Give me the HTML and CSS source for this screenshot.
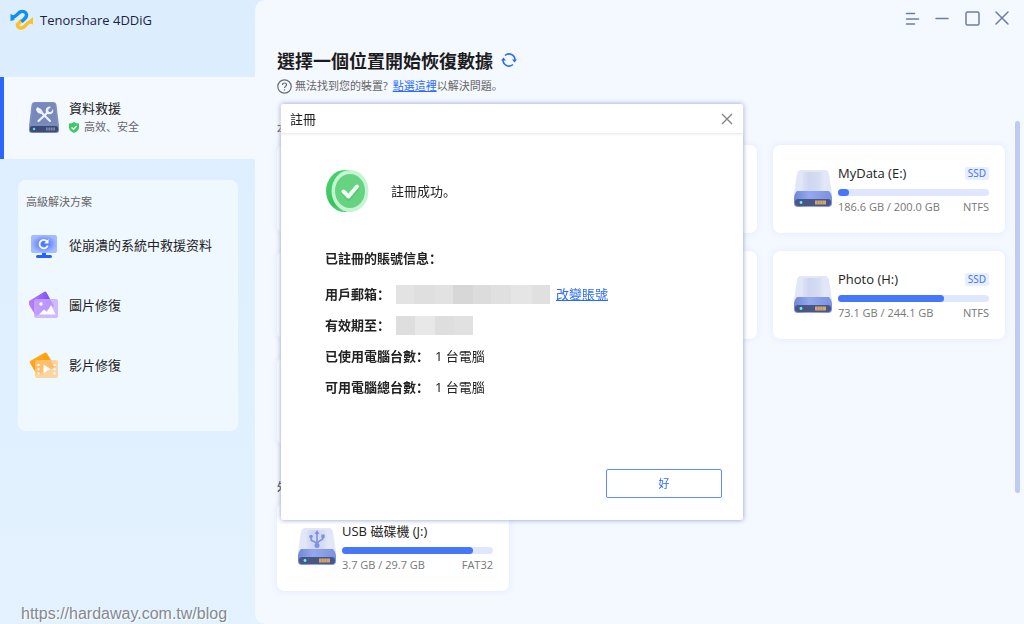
FILE: index.html
```html
<!DOCTYPE html>
<html lang="zh-Hant">
<head>
<meta charset="utf-8">
<meta name="viewport" content="width=device-width, initial-scale=1">
<title>Tenorshare 4DDiG</title>
<link rel="stylesheet" href="styles.css">
</head>
<body>
<svg class="defs" aria-hidden="true">
  <defs>
    <linearGradient id="top" x1="0" x2="1"><stop offset="0" stop-color="#dde3f5"/><stop offset=".3" stop-color="#ced7ef"/><stop offset=".75" stop-color="#d6ddf2"/><stop offset="1" stop-color="#e6eaf8"/></linearGradient>
    <linearGradient id="band" x1="0" x2="1"><stop offset="0" stop-color="#6f87d6"/><stop offset=".4" stop-color="#94a8ee"/><stop offset="1" stop-color="#7b92e0"/></linearGradient>
    <symbol id="drive" viewBox="0 0 38 38">
      <path d="M7 0h24q3 0 4 4l3 20v3H0v-3L3 4q1-4 4-4z" fill="#e2e7f7"/>
      <path d="M10 2h18q2 0 2 3l1 17H8L9 5q0-3 1-3z" fill="url(#top)"/>
      <path d="M3 21h32q3 3 3 8v4q0 4-4 4H4q-4 0-4-4v-4q0-5 3-8z" fill="url(#band)"/>
      <rect x="1" y="29" width="36" height="7" rx="3" fill="#4a5784"/>
      <circle cx="7" cy="32.500" r="1.400" fill="#6ff0f2"/>
      <path d="M21 30.500h11v4H21z" fill="#d0a673"/>
      <path d="M23.500 30.500v4M26 30.500v4M28.500 30.500v4" stroke="#9f835f" stroke-width=".5"/>
    </symbol>
  </defs>
</svg>
<div class="app">
  <aside class="sidebar">
    <div class="brand">
      <svg width="24" height="22" viewBox="0 0 24 22" fill="none" stroke-width="3.400" aria-hidden="true">
        <path d="M7.500 14.500C7 18 10 20 13 18.500c3-1.500 4-5.500 8-6" stroke="#ffc021"/>
        <path d="M19.500 11L23 8v7.500l-2.500-1z" fill="#ffc021"/>
        <path d="M7.500 15.500L12 11" stroke="#ffc021"/>
        <path d="M3 8.200C6.500 7.500 7.500 4.500 10 3c3-1.500 6 0 6.500 2.500S15.500 9 11.500 12.800" stroke="#0f8ff0"/>
        <path d="M.500 5l3.500 1.500.500 4.500L.500 12z" fill="#0f8ff0"/>
      </svg>
      <span>Tenorshare 4DDiG</span>
    </div>
    <a class="nav-active" href="#recovery">
      <svg width="30" height="32" viewBox="0 0 30 32" aria-hidden="true">
        <path d="M6 0h18q3 0 3.500 3L30 24H0L2.500 3Q3 0 6 0z" fill="#7f8fc0"/>
        <path d="M6 1h18q2 0 2 3l2 18H2L4 4q0-3 2-3z" fill="#7788bb"/>
        <rect y="23" width="30" height="8" rx="3" fill="#7787b9"/>
        <rect x="1" y="24" width="28" height="6" rx="2" fill="#3d4c76"/>
        <circle cx="5" cy="27" r="1.200" fill="#5de0df"/>
        <path d="M17 25.500h9v3h-9z" fill="#7d89a9"/><path d="M19 25v4M21.500 25v4M24 25v4" stroke="#3d4c76" stroke-width=".6"/>
        <path d="M9.500 19l9-8.500M13 11l8 8" stroke="#eef2ff" stroke-width="2.200" stroke-linecap="round"/>
        <path d="M8 5l4 2 2 3-2 2-3-1-2-3z" fill="#eef2ff"/>
        <path d="M22 5l-3 3 1 2 2 0 2-3q1 4-2 5-3 1-5-1-1-4 1-5.500Q20 4 22 5z" fill="#eef2ff"/>
      </svg>
      <span class="nav-text">
        <span>資料救援</span>
        <span class="nav-note">
          <svg width="10" height="11" viewBox="0 0 10 11" aria-hidden="true"><path d="M5 0Q7 1.500 10 1.500V6Q9.500 9 5 11 .500 9 0 6V1.500Q3 1.500 5 0z" fill="#3dc963"/><path d="M2.500 5.500l2 1.800L7.700 4" fill="none" stroke="#fff" stroke-width="1.300"/></svg>
          高效、安全
        </span>
      </span>
    </a>
    <nav class="panel" aria-labelledby="panel-title">
      <h2 id="panel-title" class="panel-title">高級解決方案</h2>
      <a class="tool" href="#crashed">
        <svg width="30" height="28" viewBox="0 0 30 28" aria-hidden="true">
          <defs><radialGradient id="screen"><stop offset="0" stop-color="#3e6dff"/><stop offset=".5" stop-color="#6f91ff"/><stop offset="1" stop-color="#a5bbff"/></radialGradient></defs>
          <path d="M13 21h4v4h-4z" fill="#2463ff"/><rect x="7" y="24" width="16" height="3" rx="1.500" fill="#2463ff"/>
          <rect x="2" y="4" width="26" height="18" rx="2" fill="url(#screen)"/>
          <path d="M18 10.500a4.200 4.200 0 1 0 .7 4" fill="none" stroke="#fff" stroke-width="1.800"/><path d="M19.500 8v4.500H15z" fill="#fff"/>
        </svg>
        從崩潰的系統中救援资料
      </a>
      <a class="tool" href="#photo">
        <svg width="30" height="28" viewBox="0 0 30 28" aria-hidden="true">
          <defs><linearGradient id="violet" x1="0" x2="1"><stop offset="0" stop-color="#c084ff"/><stop offset="1" stop-color="#7143f5"/></linearGradient></defs>
          <path d="M0 10L15 1q1.500-1 2.500.5L25 15 7 25-1 12q-.5-1 1-2z" fill="url(#violet)"/>
          <rect x="5" y="8" width="24" height="19" rx="2" fill="#c7a9ff" fill-opacity=".8"/>
          <circle cx="12" cy="13" r="1.700" fill="#fff"/><path d="M10 23.500l5-5 3 2.500 4-7 4.500 9.500z" fill="#fff"/>
        </svg>
        圖片修復
      </a>
      <a class="tool" href="#video">
        <svg width="30" height="28" viewBox="0 0 30 28" aria-hidden="true">
          <defs><linearGradient id="amber" y2="1"><stop offset="0" stop-color="#ffb21e"/><stop offset="1" stop-color="#ff8a00"/></linearGradient></defs>
          <path d="M2 9.500L15 2q2-1 3 .5L26 16 8 24 1 12q-1-1.500 1-2.500z" fill="url(#amber)"/>
          <rect x="6" y="9" width="23" height="18" rx="2" fill="#ffc989" fill-opacity=".78"/>
          <path d="M9.500 13v11M25.500 13v11" stroke="#fff" stroke-width="2" stroke-dasharray="2 2.300"/><path d="M14.500 13.500l7 4.500-7 4z" fill="#fff"/>
        </svg>
        影片修復
      </a>
    </nav>
    <a class="site" href="https://hardaway.com.tw/blog">https://hardaway.com.tw/blog</a>
  </aside>

  <main class="main">
    <div class="controls">
      <button aria-label="選單"><svg width="16" height="16" viewBox="0 0 16 16"><path d="M2.500 3.500h8M2.500 9h12M2.500 14h8"/></svg></button>
      <button aria-label="最小化"><svg width="16" height="16" viewBox="0 0 16 16"><path d="M2 8.500h12"/></svg></button>
      <button aria-label="最大化"><svg width="16" height="16" viewBox="0 0 16 16"><rect x="2" y="2" width="13" height="13" rx="1.500"/></svg></button>
      <button aria-label="關閉視窗"><svg width="16" height="16" viewBox="0 0 16 16"><path d="M2 2l12 12M14 2L2 14"/></svg></button>
    </div>
    <header class="heading">
      <h1>選擇一個位置開始恢復數據</h1>
      <button class="refresh" aria-label="重新整理"><svg width="16" height="16" viewBox="0 0 16 16" fill="none" stroke="#2b6bff" stroke-width="1.600" aria-hidden="true"><path d="M4 3.500A6 6 0 0 1 14 8M12 12.500A6 6 0 0 1 2 8"/><path d="M11 7.500h5l-2.500 3zM0 8.500h5L2.500 5.500z" fill="#2b6bff" stroke="none"/></svg></button>
    </header>
    <p class="help">
      <svg width="15" height="15" viewBox="0 0 15 15" fill="none" stroke="#666b76" stroke-width="1.200" aria-hidden="true"><circle cx="7.500" cy="7.500" r="6.700"/><path d="M5.500 6q0-2 2-2t2 1.800q0 1-1 1.600t-1 1.600M7.500 10.200v1.300"/></svg>
      <span>無法找到您的裝置? <a href="#help">點選這裡</a>以解決問題。</span>
    </p>
    <div class="scroll">
      <div class="content">
        <h2 class="group">本</h2>
        <div class="grid">
          <div class="card"></div>
          <div class="card"></div>
          <article class="card">
            <svg class="drive" aria-hidden="true"><use href="#drive"/></svg>
            <div class="info">
              <div class="line"><h3>MyData (E:)</h3><span class="tag">SSD</span></div>
              <div class="bar"><div class="fill" style="width:7%"></div></div>
              <div class="line meta"><span>186.6 GB / 200.0 GB</span><span>NTFS</span></div>
            </div>
          </article>
          <div class="card"></div>
          <div class="card"></div>
          <article class="card">
            <svg class="drive" aria-hidden="true"><use href="#drive"/></svg>
            <div class="info">
              <div class="line"><h3>Photo (H:)</h3><span class="tag">SSD</span></div>
              <div class="bar"><div class="fill" style="width:70%"></div></div>
              <div class="line meta"><span>73.1 GB / 244.1 GB</span><span>NTFS</span></div>
            </div>
          </article>
          <div class="card"></div>
        </div>
        <h2 class="group external">外</h2>
        <div class="grid">
          <article class="card">
            <svg class="drive" viewBox="0 0 38 38" aria-hidden="true"><use href="#drive"/><g fill="none" stroke="#7d91e0" stroke-width="1.600"><path d="M19 5v13M13 8v3q0 2 3 2.500l3 2 3-3q3-.5 3-3V8"/></g><g fill="#7d91e0"><path d="M19 2l2.500 4h-5z"/><circle cx="19" cy="17.500" r="2.500"/><circle cx="13" cy="8.500" r="1.800"/><path d="M23.300 6.500h3.400v3.400h-3.400z"/></g></svg>
            <div class="info">
              <div class="line"><h3>USB 磁碟機 (J:)</h3></div>
              <div class="bar"><div class="fill" style="width:87%"></div></div>
              <div class="line meta"><span>3.7 GB / 29.7 GB</span><span>FAT32</span></div>
            </div>
          </article>
        </div>
      </div>
      <div class="thumb"></div>
    </div>
  </main>
</div>

<div class="overlay">
  <section class="dialog" role="dialog" aria-labelledby="dialog-title">
    <header class="dialog-head">
      <h2 id="dialog-title">註冊</h2>
      <button aria-label="關閉"><svg width="12" height="12" viewBox="0 0 12 12" aria-hidden="true"><path d="M1 1l10 10M11 1L1 11" stroke="#858585" stroke-width="1.400"/></svg></button>
    </header>
    <div class="dialog-body">
      <div class="success">
        <svg width="44" height="44" viewBox="0 0 44 44" aria-hidden="true">
          <defs><linearGradient id="coin" y2="1"><stop offset="0" stop-color="#4fd473"/><stop offset=".5" stop-color="#35c45c"/><stop offset="1" stop-color="#86e3a0"/></linearGradient></defs>
          <ellipse cx="19.500" cy="22" rx="18.500" ry="21" fill="url(#coin)"/><path d="M19 1h6v42h-6z" fill="url(#coin)"/>
          <ellipse cx="25" cy="22" rx="18.500" ry="21" fill="#c5f4d2"/>
          <ellipse cx="25" cy="22" rx="15" ry="17" fill="#65d380"/>
          <path d="M18.500 24.500l5 5.500 9-10" fill="none" stroke="#47b965" stroke-width="4" stroke-linecap="round" stroke-linejoin="round" opacity=".4"/>
          <path d="M18.500 22.500l5 5 8.500-10" fill="none" stroke="#f2fff5" stroke-width="4" stroke-linecap="round" stroke-linejoin="round"/>
        </svg>
        <span>註冊成功。</span>
      </div>
      <h3 class="account-title">已註冊的賬號信息：</h3>
      <dl class="account">
        <div><dt>用戶郵箱：</dt><dd><span class="mask email" role="img" aria-label="已隱藏"></span><a href="#account">改變賬號</a></dd></div>
        <div><dt>有效期至：</dt><dd><span class="mask date" role="img" aria-label="已隱藏"></span></dd></div>
        <div><dt>已使用電腦台數：</dt><dd>1 台電腦</dd></div>
        <div><dt>可用電腦總台數：</dt><dd>1 台電腦</dd></div>
      </dl>
      <button class="ok">好</button>
    </div>
  </section>
</div>
</body>
</html>
```

FILE: styles.css
```css
* { box-sizing: border-box; }
body {
  margin: 0;
  font: 13px/20px "Noto Sans", "Noto Sans CJK SC", sans-serif;
  font-feature-settings: "locl" 0;
  color: #222;
  background: #dfeffe;
}
h1, h2, h3, p, dl, dd { margin: 0; font-weight: 400; font-size: 13px; }
button { padding: 0; border: 0; background: none; font: inherit; }
svg { display: block; flex: none; }
a { color: #2b6bff; }
.defs { position: absolute; width: 0; height: 0; }

.app {
  display: flex;
  min-height: 100vh;
  background: linear-gradient(#dcedfe, #e4f2ff);
}

.sidebar { width: 255px; flex: none; display: flex; flex-direction: column; }
.brand {
  display: flex;
  align-items: center;
  gap: 6px;
  height: 77px;
  padding: 0 10px 37px;
  color: #1b1f45;
  font-family: "Open Sans", sans-serif;
}
.nav-active {
  display: flex;
  align-items: center;
  gap: 10px;
  height: 82px;
  padding-left: 25px;
  border-left: 4px solid #2b66ff;
  background: #f4f8ff;
  color: #222;
  text-decoration: none;
}
.nav-text { display: grid; padding-bottom: 2px; }
.nav-note { display: flex; align-items: center; gap: 5px; font-size: 11px; line-height: 18px; color: #666; }
.panel {
  margin: 21px 17px 0 18px;
  padding: 12px 9px 36px 8px;
  border-radius: 8px;
  background: #f0f8ff;
}
.panel-title { margin-bottom: 3px; font-size: 11px; color: #666; }
.tool {
  display: flex;
  align-items: center;
  gap: 10px;
  height: 60px;
  padding-left: 3px;
  color: #222;
  text-decoration: none;
}
.site {
  margin: auto 0 0 21px;
  font: 16px/20px "Liberation Sans", Arial, sans-serif;
  color: #858990;
  text-decoration: none;
  text-shadow: 1px 1px 0 #fff;
}

.main {
  flex: 1;
  min-width: 0;
  display: flex;
  flex-direction: column;
  padding: 0 4px 0 22px;
  border-radius: 10px 0 0 10px;
  background: #f4f8ff;
}
.controls { display: flex; justify-content: flex-end; gap: 14px; padding: 10px 10px 0 0; }
.controls svg { fill: none; stroke: #6d7ba8; stroke-width: 1.5; stroke-linecap: round; }
.heading { display: flex; align-items: center; gap: 8px; margin-top: 21px; }
.heading h1 { font: 700 18px/26px "Noto Sans CJK SC", sans-serif; color: #1c1c1c; }
.help { display: flex; align-items: center; gap: 3px; margin-top: 3px; font-size: 11px; color: #666; }
.help a { margin-left: 2px; }
.scroll { flex: 1; display: flex; align-items: flex-start; gap: 10px; margin-top: 25px; }
.content { flex: 1; min-width: 0; }
.thumb { width: 5px; height: 372px; border-radius: 3px; background: #becbf3; }
.group { font-size: 11px; line-height: 16px; margin-bottom: 8px; }
.external { margin-top: 34px; }
.grid { display: grid; grid-template-columns: repeat(3, 1fr); gap: 18px 16px; }
.card {
  display: flex;
  align-items: flex-start;
  gap: 6px;
  min-height: 88px;
  padding: 17px 16px 14px 21px;
  border-radius: 7px;
  background: #fff;
  box-shadow: 0 0 6px #dfe8ff;
}
.drive { width: 38px; height: 38px; margin-top: 8px; }
.info { flex: 1; min-width: 0; }
.line { display: flex; justify-content: space-between; align-items: center; }
.line h3 { font-family: "Open Sans", "Noto Sans CJK SC", sans-serif; line-height: 22px; }
.tag { padding: 0 3px; border-radius: 2px; background: #e8efff; color: #3f73ff; font-size: 10px; line-height: 13px; }
.bar { height: 7px; margin: 5px 0 2px; border-radius: 4px; background: #dfe7ff; }
.fill { height: 100%; border-radius: 4px; background: #4677fa; }
.meta { font: 11px/18px "Open Sans", sans-serif; color: #777; }

.overlay {
  position: fixed;
  inset: 0;
  display: flex;
  align-items: center;
  justify-content: center;
}
.dialog {
  width: 462px;
  border-radius: 2px;
  background: #fff;
  box-shadow: 0 0 5px #8d9bc9;
}
.dialog-head {
  display: flex;
  align-items: center;
  justify-content: space-between;
  height: 30px;
  padding: 0 10px 0 9px;
  border-bottom: 1px solid #eee;
  box-shadow: 0 1px 2px #f2f2f2;
}
.dialog-body { display: flex; flex-direction: column; padding: 35px 21px 22px 44px; }
.success { display: flex; align-items: center; gap: 22px; }
.account-title { margin-top: 35px; font-weight: 700; }
.account { display: grid; gap: 11px; margin-top: 16px; }
.account > div { display: flex; align-items: center; gap: 6px; }
.account dt { font-weight: 700; }
.account dd { display: flex; align-items: center; gap: 6px; }
.mask { display: block; height: 19px; }
.email { width: 154px; background: linear-gradient(90deg, #e3e3e3 12%, #dfdfdf 12% 25%, #e2e2e2 25% 37%, #d7d7d7 37% 50%, #dcdcdc 50% 62%, #e0e0e0 62% 75%, #e5e5e5 75% 88%, #e0e0e0 88%); }
.date { width: 77px; background: linear-gradient(90deg, #dedede 25%, #e8e8e8 25% 50%, #dedede 50% 75%, #e1e1e1 75%); }
.ok {
  align-self: flex-end;
  width: 116px;
  height: 29px;
  margin-top: 72px;
  border: 1px solid #5c8bff;
  border-radius: 2px;
  color: #2b6bff;
  font-size: 11px;
}
```
